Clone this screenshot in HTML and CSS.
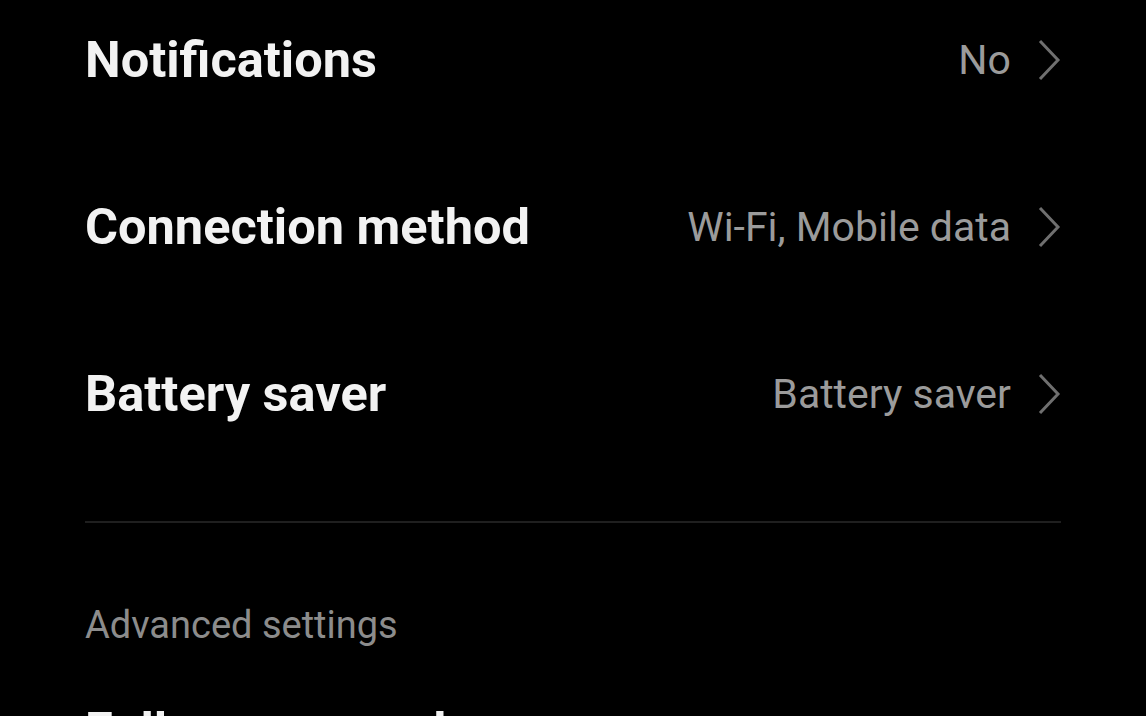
FILE: index.html
```html
<!DOCTYPE html>
<html lang="en">
<head>
    <meta charset="UTF-8">
    <meta name="viewport" content="width=device-width, initial-scale=1.0">
    <title>App settings</title>
    <link rel="stylesheet" href="styles.css">
</head>
<body>
    <div class="settings">
        <!-- Main options -->
        <div class="list">
            <div class="row">
                <div class="row-title">Notifications</div>
                <div class="row-value">No</div>
                <svg class="chevron" viewBox="0 0 24 44"><path d="M3 3 L21 22 L3 41"/></svg>
            </div>
            <div class="row">
                <div class="row-title">Connection method</div>
                <div class="row-value">Wi-Fi, Mobile data</div>
                <svg class="chevron" viewBox="0 0 24 44"><path d="M3 3 L21 22 L3 41"/></svg>
            </div>
            <div class="row">
                <div class="row-title">Battery saver</div>
                <div class="row-value">Battery saver</div>
                <svg class="chevron" viewBox="0 0 24 44"><path d="M3 3 L21 22 L3 41"/></svg>
            </div>
        </div>

        <div class="divider"></div>

        <!-- Advanced -->
        <div class="section-label">Advanced settings</div>
        <div class="row">
            <div class="row-title">Full screen mode</div>
        </div>
    </div>
</body>
</html>
```

FILE: styles.css
```css
* {
    box-sizing: border-box;
    margin: 0;
    padding: 0;
}
html, body {
    height: 100%;
    overflow: hidden;
}
body {
    background-color: #000;
    font-family: Roboto, "Noto Sans", sans-serif;
}
.settings {
    padding: 0 85px;
}
.list {
    margin-top: -24px;
}
.row {
    display: flex;
    align-items: center;
    height: 167px;
}
.row-title {
    flex: 1;
    color: #f2f2f2;
    font-size: 50.5px;
    font-weight: 700;
}
.row-value {
    color: #9b9b9b;
    font-size: 41px;
    margin-right: 26px;
}
.chevron {
    width: 24px;
    height: 44px;
    fill: none;
    stroke: #6f6f6f;
    stroke-width: 3;
}
.divider {
    height: 2px;
    background-color: #1f1f1f;
    margin-top: 44px;
}
.section-label {
    color: #8c8c8c;
    font-size: 38px;
    margin-top: 80px;
}
```
